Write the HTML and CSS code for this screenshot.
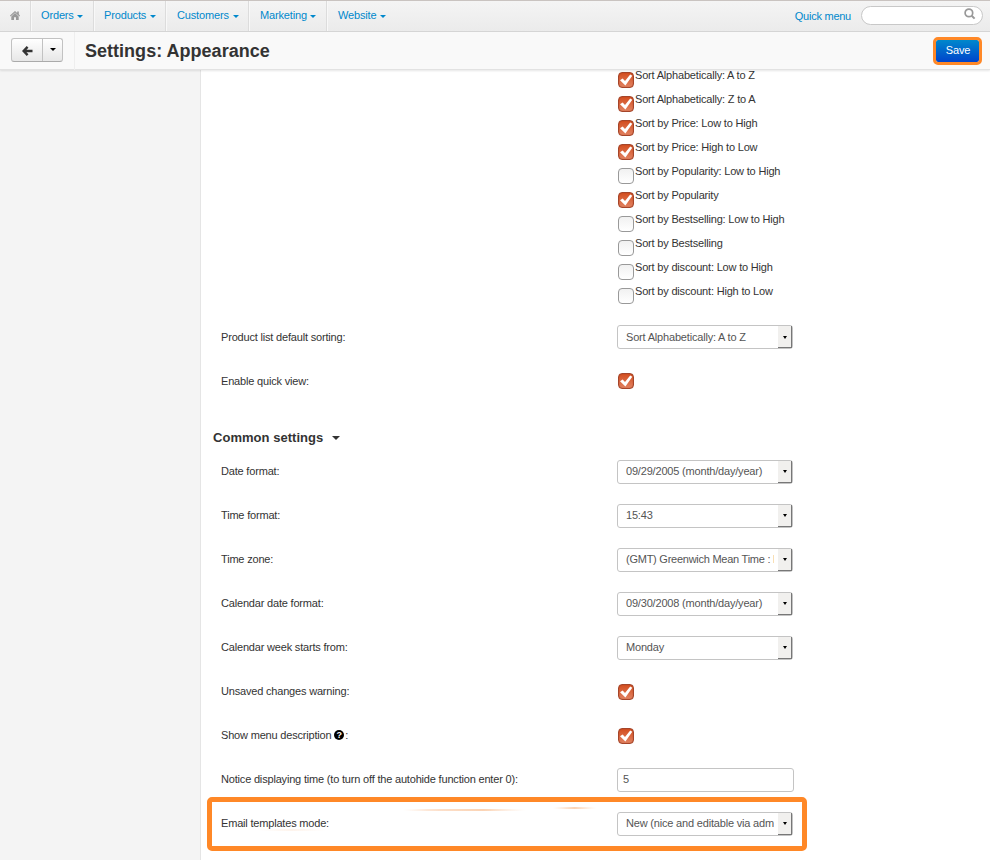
FILE: index.html
```html
<!DOCTYPE html>
<html lang="en">
<head>
<meta charset="utf-8">
<title>Settings: Appearance</title>
<link rel="stylesheet" href="styles.css">
</head>
<body>
<svg class="defs" width="0" height="0" aria-hidden="true">
  <symbol id="tick" viewBox="0 0 16 16"><path d="M2 8.3 L4.6 6.5 L7 9 L12.2 2.5 L14.3 3.7 L7.4 13.4 Z" fill="#fff"/></symbol>
</svg>
<nav class="topbar">
  <a class="nav home"><svg width="10" height="9" viewBox="0 0 10 9"><path d="M5 0 L7.2 2 V.5 H8.8 V3.3 L10 4.6 L9.4 5.4 L5 1.5 L.6 5.4 L0 4.6Z M5 2.1 L8.7 5.4 V9 H6 V6.2 H4 V9 H1.3 V5.4Z" fill="#999"/></svg></a>
  <a class="nav orders">Orders<i class="caret"></i></a>
  <a class="nav products">Products<i class="caret"></i></a>
  <a class="nav customers">Customers<i class="caret"></i></a>
  <a class="nav marketing">Marketing<i class="caret"></i></a>
  <a class="nav website">Website<i class="caret"></i></a>
  <a class="quick">Quick menu</a>
  <div class="search"><svg width="12" height="12" viewBox="0 0 12 12" fill="none" stroke="#999"><circle cx="4.9" cy="4.9" r="3.8" stroke-width="1.7"/><path d="M7.7 7.7 L10.6 10.6" stroke-width="2"/></svg></div>
</nav>
<header class="actions">
  <div class="btn-group">
    <span class="back"><svg width="11" height="10" viewBox="0 0 11 10" fill="none" stroke="#333" stroke-width="2.4"><path d="M5.6 .8 L1.6 5 L5.6 9.2 M1.6 5 H10.5"/></svg></span>
    <span class="drop"><i class="caret"></i></span>
  </div>
  <h1>Settings: Appearance</h1>
  <button class="save">Save</button>
</header>
<div class="page">
  <aside></aside>
  <main>
    <ul class="sorts">
      <li><span class="check on"><svg><use href="#tick"/></svg></span><span>Sort Alphabetically: A to Z</span></li>
      <li><span class="check on"><svg><use href="#tick"/></svg></span><span>Sort Alphabetically: Z to A</span></li>
      <li><span class="check on"><svg><use href="#tick"/></svg></span><span>Sort by Price: Low to High</span></li>
      <li><span class="check on"><svg><use href="#tick"/></svg></span><span>Sort by Price: High to Low</span></li>
      <li><span class="check"></span><span>Sort by Popularity: Low to High</span></li>
      <li><span class="check on"><svg><use href="#tick"/></svg></span><span>Sort by Popularity</span></li>
      <li><span class="check"></span><span>Sort by Bestselling: Low to High</span></li>
      <li><span class="check"></span><span>Sort by Bestselling</span></li>
      <li><span class="check"></span><span>Sort by discount: Low to High</span></li>
      <li><span class="check"></span><span>Sort by discount: High to Low</span></li>
    </ul>
    <div class="row"><label>Product list default sorting:</label><div class="select"><span>Sort Alphabetically: A to Z</span><b><i class="caret"></i></b></div></div>
    <div class="row"><label>Enable quick view:</label><span class="check on"><svg><use href="#tick"/></svg></span></div>
    <h2>Common settings<i class="caret"></i></h2>
    <section class="common">
    <div class="row"><label>Date format:</label><div class="select"><span>09/29/2005 (month/day/year)</span><b><i class="caret"></i></b></div></div>
    <div class="row"><label>Time format:</label><div class="select"><span>15:43</span><b><i class="caret"></i></b></div></div>
    <div class="row"><label>Time zone:</label><div class="select zone"><span>(GMT) Greenwich Mean Time : D</span><b><i class="caret"></i></b></div></div>
    <div class="row"><label>Calendar date format:</label><div class="select"><span>09/30/2008 (month/day/year)</span><b><i class="caret"></i></b></div></div>
    <div class="row"><label>Calendar week starts from:</label><div class="select"><span>Monday</span><b><i class="caret"></i></b></div></div>
    <div class="row"><label>Unsaved changes warning:</label><span class="check on"><svg><use href="#tick"/></svg></span></div>
    <div class="row"><label>Show menu description <span class="help">?</span>:</label><span class="check on"><svg><use href="#tick"/></svg></span></div>
    <div class="row"><label>Notice displaying time (to turn off the autohide function enter 0):</label><div class="input">5</div></div>
    <div class="highlight">
      <i class="streak one"></i><i class="streak two"></i><i class="streak three"></i>
      <div class="row"><label>Email templates mode:</label><div class="select"><span>New (nice and editable via adm</span><b><i class="caret"></i></b></div></div>
    </div>
    </section>
  </main>
</div>
</body>
</html>
```
FILE: styles.css
```css
* { box-sizing: border-box; }
body { margin: 0; height: 860px; overflow: hidden; background: #fff; color: #333; font: 11px/24px "Liberation Sans", Arial, sans-serif; letter-spacing: -.185px; }
.defs { position: absolute; }
.caret { display: inline-block; width: 0; height: 0; border: 3px solid transparent; border-top-color: currentColor; border-bottom: 0; }

.topbar { display: flex; height: 32px; border-top: 1px solid #c9c3c0; border-bottom: 1px solid #d6d6d6; background: linear-gradient(#f4f4f4, #ebebeb); color: #08c; }
.nav { display: flex; align-items: center; height: 30px; padding: 0 0 2px 10px; border-right: 1px solid #dcdcdc; box-shadow: 1px 0 #f8f8f8; letter-spacing: -.15px; }
.nav .caret { margin: 3px 0 0 auto; }
.home { width: 31px; }
.orders { width: 63px; }
.products { width: 72px; }
.customers { width: 83px; }
.marketing { width: 78px; }
.nav.orders, .nav.products, .nav.customers { padding-right: 9px; }
.nav.marketing { padding-right: 10px; }
.nav.orders { padding-right: 10px; }
.website { width: 59px; border: 0; box-shadow: none; padding-left: 11px; }
.marketing, .customers { padding-left: 11px; }
.quick { margin-left: auto; line-height: 30px; letter-spacing: -.25px; }
.search { display: flex; justify-content: flex-end; width: 122px; height: 19px; margin: 5px 7px 0 10px; padding: 1px 6px 0 0; border: 1px solid #c8c8c8; border-radius: 10px; background: #fff; }

.actions { position: relative; z-index: 1; display: flex; align-items: flex-start; height: 38px; padding-left: 11px; background: #f9f9f9; border-bottom: 1px solid #e2e2e2; box-shadow: 0 1px 2px rgba(0,0,0,.1); }
.btn-group { display: flex; width: 52px; height: 24px; margin-top: 6px; border: 1px solid #c2c2c2; border-bottom-color: #aaa; border-radius: 3px; background: linear-gradient(#fff, #e7e7e7); color: #000; }
.back { display: flex; align-items: center; justify-content: center; width: 31px; padding-top: 2px; border-right: 1px solid #c2c2c2; }
.drop { display: flex; flex: 1; align-items: center; justify-content: center; padding-bottom: 1px; }
h1 { margin: 0 0 0 11px; padding-left: 10px; border-left: 1px solid #eee; font-size: 18px; line-height: 38px; letter-spacing: .02px; }
.save { width: 49px; height: 28px; margin: 5px 8px 0 auto; padding: 0 0 2px 1px; border: 3px solid #ff8827; border-radius: 5px; background: linear-gradient(#08c, #04c) padding-box; color: #fff; font: 11px/20px "Liberation Sans", Arial, sans-serif; letter-spacing: -.15px; }

.page { display: flex; height: 790px; }
aside { flex: none; width: 201px; background: #f4f4f4; border-right: 1px solid #e5e5e5; }
main { flex: 1; min-width: 0; }
.sorts { margin: -6px 0 21px 417px; padding: 0; list-style: none; }
.sorts li { display: flex; height: 24px; line-height: 23px; }
.sorts .check { margin: 8px 1px 0 0; }
.check { flex: none; width: 16px; height: 16px; border: 1px solid #999; border-radius: 4px; background: linear-gradient(#f1f1f1, #fff); }
.check.on { border-color: #a5452a; background: linear-gradient(#d34e20, #e18261); box-shadow: inset 0 0 1px #a23b17; }
.check svg { display: block; width: 16px; height: 16px; margin: -1px; }
.row { display: flex; align-items: center; height: 24px; margin-bottom: 20px; padding-left: 20px; }
label { width: 396px; white-space: nowrap; }
.row .check { margin-left: 1px; }
.select { display: flex; width: 176px; height: 24px; padding-left: 8px; border: 1px solid #c4c4c4; border-radius: 3px; color: #555; line-height: 22px; }
.select span { width: 148px; overflow: hidden; white-space: nowrap; }
.select.zone span { letter-spacing: -.25px; }
.select b { display: flex; align-items: center; justify-content: center; width: 14px; margin: 0 0 0 auto; padding-top: 1px; background: #f1f0ee; border-right: 1px solid #777; border-bottom: 1px solid #777; color: #000; }
.select .caret { border-width: 3px 2.5px 0; }
.input { width: 177px; height: 24px; padding-left: 5px; border: 1px solid #c4c4c4; border-radius: 3px; color: #555; line-height: 22px; }
.common label { line-height: 22px; padding-bottom: 2px; }
.common .select, .common .input { line-height: 20px; }
.common .select b { padding-top: 0; }
h2 { display: flex; align-items: center; height: 24px; margin: 33px 0 10px 12px; font-size: 13px; letter-spacing: .03px; }
h2 .caret { margin: 0 0 0 9px; border-width: 4px 4px 0; }
.help { display: inline-block; width: 10px; height: 10px; border-radius: 50%; background: #000; color: #fff; font-size: 9px; font-weight: bold; line-height: 10px; text-align: center; vertical-align: 1px; letter-spacing: 0; margin-right: 1px; }
.highlight { position: relative; width: 600px; height: 54px; margin: -15px 0 0 6px; padding: 10px 0 0; border: 5px solid #ff8827; border-radius: 5px; }
.highlight .row { margin: 0; padding-left: 9px; }
.streak { position: absolute; border-radius: 50%; height: 2px; background: linear-gradient(90deg, transparent, #fbd3b4, transparent); }
.one { left: 190px; top: 7px; width: 125px; background: linear-gradient(90deg, transparent, #fde3d0 20%, #fbd3b4 65%, transparent); }
.two { left: 340px; top: 5px; width: 45px; }
.three { left: 45px; top: 27px; width: 70px; opacity: .25; }
```
